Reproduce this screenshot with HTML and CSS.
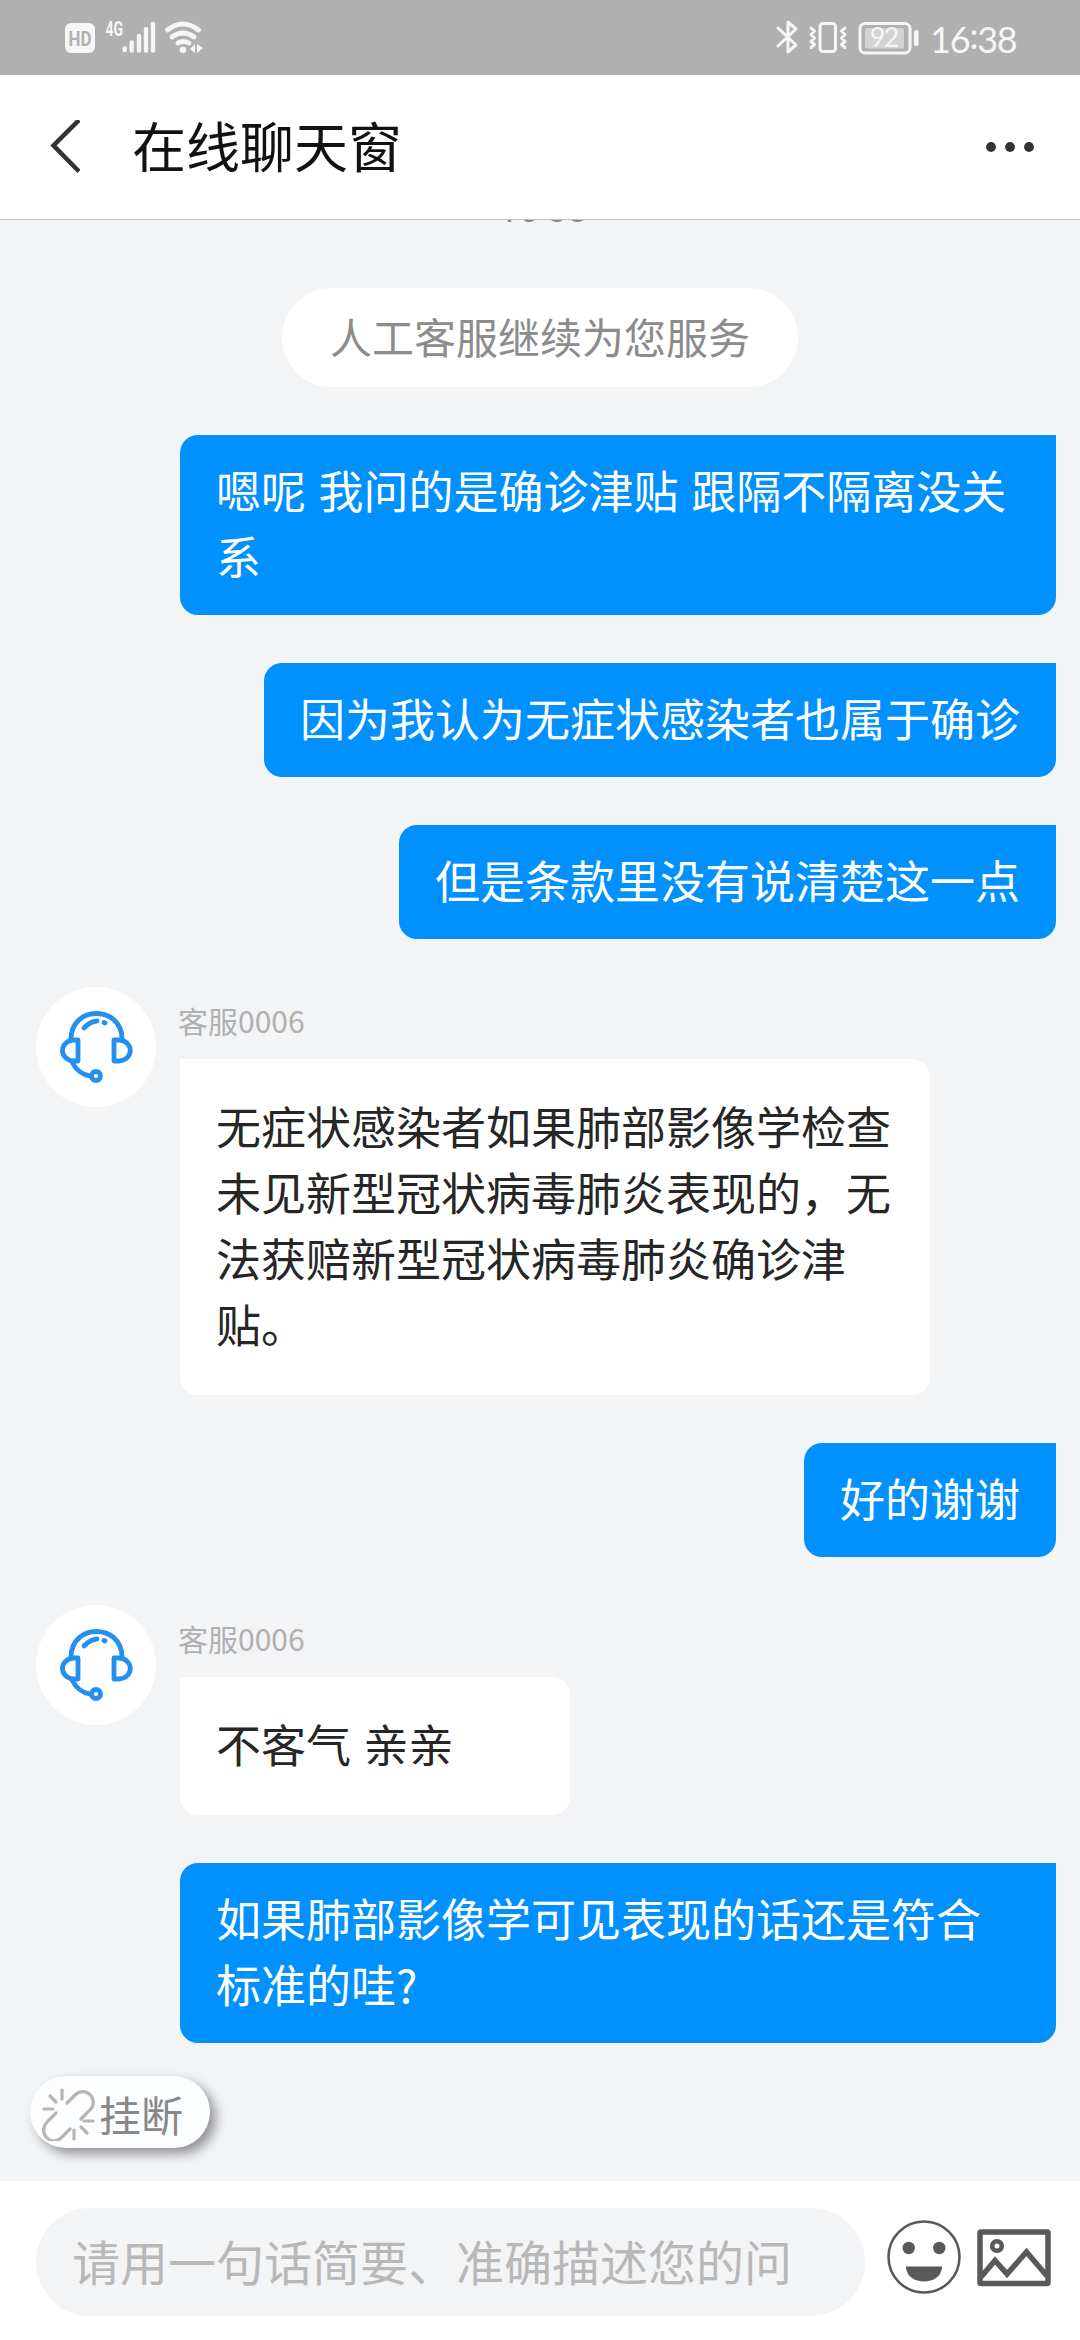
FILE: index.html
```html
<!DOCTYPE html>
<html lang="zh-CN">
<head>
    <meta charset="UTF-8">
    <meta name="viewport" content="width=device-width, initial-scale=1.0">
    <title>在线聊天窗</title>
    <link rel="stylesheet" href="styles.css">
</head>
<body>

    <!-- Status bar -->
    <div class="status-bar">
        <svg class="status-left" width="146" height="50" viewBox="60 12 146 50">
            <rect x="65" y="23" width="30" height="30" rx="6" fill="#f6f6f6"/>
            <text x="80" y="45.500" class="hd" textLength="23" lengthAdjust="spacingAndGlyphs">HD</text>
            <text x="105.500" y="35.500" class="net" textLength="17.500" lengthAdjust="spacingAndGlyphs">4G</text>
            <g stroke="#f6f6f6" stroke-width="4.400" stroke-linecap="round">
                <path d="M124.700 48.500v1.500M131.700 42.500v8M139 36v14.500M146 29v21.500M153 24v26.500"/>
            </g>
            <g fill="none" stroke="#f6f6f6" stroke-width="4.800" stroke-linecap="round">
                <path d="M167.500 30q15.500-12 31 0"/>
                <path d="M172 37q11-8 22 0"/>
                <path d="M178 43q5.500-3 11 0"/>
            </g>
            <circle cx="183" cy="50" r="3.300" fill="#f6f6f6"/>
            <path d="M190 49l5-5v9zM197 44l6 4-6 5z" fill="#f6f6f6"/>
        </svg>
        <div class="status-right">
            <svg width="146" height="50" viewBox="774 12 146 50">
                <g fill="none" stroke="#f6f6f6" stroke-width="3" stroke-linejoin="round" stroke-linecap="round">
                    <path d="M778 28l18 17-8 7V22l8 7-18 17"/>
                    <rect x="820" y="23.500" width="15.500" height="28" rx="3"/>
                    <path d="M811 28l3.500 3-3.500 3.500 3.500 3.500-3.500 3.500 3.500 3-3.500 3M845 28l-3.500 3 3.500 3.500-3.500 3.500 3.500 3.500-3.500 3 3.500 3"/>
                    <rect x="860" y="23.500" width="50" height="29.500" rx="5"/>
                </g>
                <rect x="865" y="28" width="39" height="20.500" rx="2" fill="#d3d3d3"/>
                <rect x="914" y="30" width="4.500" height="16" rx="2" fill="#f6f6f6"/>
                <text x="884" y="47" class="battery">92</text>
            </svg>
            <span class="clock">16<i class="colon">:</i>38</span>
        </div>
    </div>

    <!-- Title bar -->
    <div class="header">
        <svg class="back" width="32" height="54" viewBox="0 0 32 54">
            <path d="M31 0L5.500 25.500l25.500 26" fill="none" stroke="#333" stroke-width="4.500"/>
        </svg>
        <h1>在线聊天窗</h1>
        <svg width="50" height="12" viewBox="0 0 50 12" fill="#333">
            <circle cx="6" cy="6" r="4.900"/>
            <circle cx="25" cy="6" r="4.900"/>
            <circle cx="44" cy="6" r="4.900"/>
        </svg>
    </div>

    <!-- Messages -->
    <div class="chat">
        <div class="time">16<i class="colon">:</i>33</div>
        <div class="notice">人工客服继续为您服务</div>

        <div class="bubble mine"><p>嗯呢 我问的是确诊津贴 跟隔不隔离没关系</p></div>
        <div class="bubble mine"><p>因为我认为无症状感染者也属于确诊</p></div>
        <div class="bubble mine"><p>但是条款里没有说清楚这一点</p></div>

        <div class="service">
            <div class="avatar">
                <svg width="74" height="74" viewBox="0 0 74 74"><use href="#headset"/></svg>
            </div>
            <div class="reply">
                <div class="name">客服0006</div>
                <div class="bubble theirs"><p>无症状感染者如果肺部影像学检查未见新型冠状病毒肺炎表现的，无法获赔新型冠状病毒肺炎确诊津贴。</p></div>
            </div>
        </div>

        <div class="bubble mine"><p>好的谢谢</p></div>

        <div class="service">
            <div class="avatar">
                <svg width="74" height="74" viewBox="0 0 74 74"><use href="#headset"/></svg>
            </div>
            <div class="reply">
                <div class="name">客服0006</div>
                <div class="bubble theirs short"><p>不客气 亲亲</p></div>
            </div>
        </div>

        <div class="bubble mine"><p>如果肺部影像学可见表现的话还是符合标准的哇?</p></div>

        <div class="hangup">
            <svg width="54" height="54" viewBox="0 0 54 54" fill="none" stroke="#b5b5b5" stroke-width="3.200" stroke-linecap="round">
                <path d="M26 16l8-8c10-10 25 4 15 15l-9 9"/>
                <path d="M15 26l-9 9C-4 46 10 60 20 51l9-9"/>
                <path d="M21 3v9M9 9l6 6M3 22h9M43 34h9M40 40l6 6M33 43v9"/>
            </svg>
            <span>挂断</span>
        </div>
    </div>

    <!-- Input area -->
    <div class="footer">
        <div class="input">请用一句话简要、准确描述您的问</div>
        <svg class="smile" width="74" height="74" viewBox="0 0 74 74">
            <circle cx="37" cy="37" r="35.500" fill="none" stroke="#595959" stroke-width="2.600"/>
            <circle cx="21.700" cy="28" r="6.200" fill="#595959"/>
            <circle cx="52.300" cy="28" r="6.200" fill="#595959"/>
            <path d="M19 46.500h36c0 20-36 20-36 0z" fill="#595959"/>
        </svg>
        <svg class="photo" width="74" height="58" viewBox="0 0 74 58" fill="none" stroke="#595959">
            <rect x="3" y="3" width="68" height="51.500" rx="1" stroke-width="5.500"/>
            <circle cx="20" cy="17" r="4.800" stroke-width="4.600"/>
            <path d="M4 48l14-16.500 12 13.500L49.500 23 70 47" stroke-width="5.500"/>
        </svg>
    </div>

    <!-- Shared avatar icon -->
    <svg class="defs" width="0" height="0">
        <g id="headset" fill="none" stroke="#248fec" stroke-width="4.800" stroke-linecap="round" stroke-linejoin="round">
            <path d="M12 29C12-5 63-5 63 29"/>
            <path d="M19 30v21h-5c-14-2-14-19 0-21zM55 30v21h5c15-1 15-20 0-21z"/>
            <path d="M13 52q6 12 18 14"/>
            <circle cx="37" cy="66" r="4.500"/>
            <path d="M25 18q6-6.500 13-7M45 12.500l1 .5"/>
        </g>
    </svg>
</body>
</html>
```

FILE: styles.css
```css
* {
    box-sizing: border-box;
}

body {
    margin: 0;
    height: 2340px;
    display: flex;
    flex-direction: column;
    overflow: hidden;
    background-color: #f3f4f6;
    font-family: "Noto Sans CJK SC", sans-serif;
    color: #262626;
}

svg {
    display: block;
    flex-shrink: 0;
}

.defs {
    position: absolute;
}

/* Status bar */
.status-bar {
    flex: none;
    display: flex;
    justify-content: space-between;
    height: 75px;
    padding: 12px 64px 0 60px;
    background-color: #b0b0b0;
}

.status-right {
    display: flex;
    gap: 10px;
}

.hd {
    font: bold 20px Roboto, sans-serif;
    fill: #b0b0b0;
    text-anchor: middle;
}

.net {
    font: bold 20px Roboto, sans-serif;
    fill: #f6f6f6;
}

.battery {
    font: 26px Lato, sans-serif;
    letter-spacing: -1px;
    fill: #f6f6f6;
    text-anchor: middle;
}

.clock {
    width: 86px;
    font-family: Lato, sans-serif;
    font-size: 36px;
    line-height: 54px;
    letter-spacing: -1.2px;
    color: #f6f6f6;
    white-space: nowrap;
}

.colon {
    position: relative;
    top: -4px;
    font-style: normal;
}

/* Title bar */
.header {
    flex: none;
    display: flex;
    align-items: center;
    height: 145px;
    padding: 0 45px 0 48px;
    background-color: #fff;
    border-bottom: 1px solid #c2c2c2;
}

.header h1 {
    flex: 1;
    margin: 0 0 5px 52px;
    font-size: 54px;
    font-weight: 400;
    line-height: 80px;
    color: #111;
}

/* Messages */
.chat {
    flex: none;
    height: 1961px;
    padding: 0 24px 0 30px;
    display: flex;
    flex-direction: column;
    align-items: flex-end;
    overflow: hidden;
}

.time {
    align-self: center;
    height: 36px;
    margin: -28px 0 60px;
    font-family: Roboto, sans-serif;
    font-size: 36px;
    line-height: 36px;
    color: #888;
}

.notice {
    align-self: center;
    height: 99px;
    margin: 0 6px 48px 0;
    padding: 0 48px;
    border-radius: 50px;
    background-color: #fff;
    color: #8c8c8c;
    font-size: 42px;
    line-height: 95px;
}

.bubble {
    border-radius: 18px;
    font-size: 45px;
    line-height: 66px;
    word-spacing: 2.5px;
}

.bubble p {
    margin: -2px 0 2px;
}

.mine {
    max-width: 876px;
    margin-bottom: 48px;
    padding: 24px 36px;
    border-top-right-radius: 0;
    background-color: #0091ff;
    color: #fff;
}

.service {
    align-self: stretch;
    display: flex;
    gap: 24px;
    margin-bottom: 48px;
    padding-left: 6px;
}

.avatar {
    width: 120px;
    height: 120px;
    display: flex;
    align-items: center;
    justify-content: center;
    border-radius: 50%;
    background-color: #fff;
}

.name {
    height: 72px;
    margin-left: -2px;
    font-size: 30px;
    line-height: 67px;
    color: #b0b0b0;
}

.theirs {
    width: 750px;
    padding: 36px;
    border-top-left-radius: 0;
    background-color: #fff;
}

.short {
    width: 390px;
}

.hangup {
    align-self: flex-start;
    display: flex;
    align-items: center;
    width: 180px;
    height: 72px;
    margin-top: -15px;
    padding: 4px 0 0 11px;
    gap: 4px;
    border-radius: 36px;
    background-color: #fcfdfe;
    box-shadow: 6px 6px 12px rgba(0, 0, 0, 0.4);
    color: #888;
    font-size: 42px;
    line-height: 66px;
}

/* Input area */
.footer {
    flex: 1;
    display: flex;
    align-items: flex-start;
    padding: 27px 29px 0 36px;
    background-color: #fff;
}

.input {
    width: 829px;
    height: 108px;
    padding-left: 36px;
    border-radius: 54px;
    background-color: #f3f4f6;
    color: #b8b8b8;
    font-size: 48px;
    line-height: 105px;
    white-space: nowrap;
}

.smile {
    margin: 12px 0 0 22px;
}

.photo {
    margin: 21px 0 0 16px;
}
```
